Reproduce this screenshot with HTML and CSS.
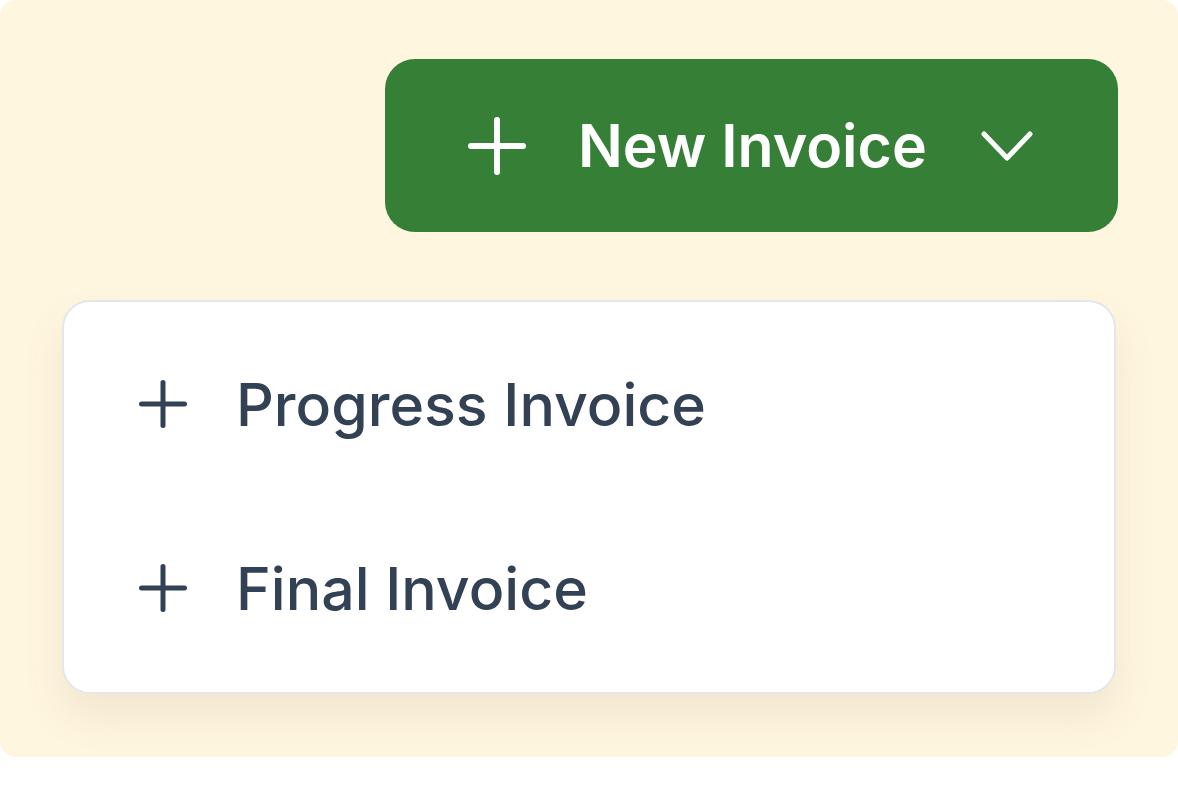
FILE: index.html
```html
<!DOCTYPE html>
<html lang="en">
<head>
    <meta charset="UTF-8">
    <meta name="viewport" content="width=device-width, initial-scale=1.0">
    <title>New Invoice</title>
    <link rel="stylesheet" href="styles.css">
</head>
<body>
    <div class="panel">
        <button class="new-button">
            <svg class="btn-plus" width="58" height="58" viewBox="0 0 58 58">
                <path d="M3 29H55M29 3V55" />
            </svg>
            <span class="btn-label">New Invoice</span>
            <svg class="btn-chevron" width="52" height="30" viewBox="0 0 52 30">
                <path d="M3 3L26 27L49 3" />
            </svg>
        </button>

        <!-- dropdown menu -->
        <div class="menu">
            <a class="menu-item" href="#">
                <svg class="item-plus" width="48" height="48" viewBox="0 0 48 48">
                    <path d="M2.5 24H45.5M24 2.5V45.5" />
                </svg>
                <span>Progress Invoice</span>
            </a>
            <a class="menu-item" href="#">
                <svg class="item-plus" width="48" height="48" viewBox="0 0 48 48">
                    <path d="M2.5 24H45.5M24 2.5V45.5" />
                </svg>
                <span>Final Invoice</span>
            </a>
        </div>
    </div>
</body>
</html>
```

FILE: styles.css
```css
body {
    margin: 0;
    padding: 0;
    background-color: #ffffff;
    font-family: Inter, "Liberation Sans", Arial, sans-serif;
}

.panel {
    width: 1178px;
    height: 757px;
    box-sizing: border-box;
    background-color: #fff6e0;
    border-radius: 16px;
    padding-top: 59px;
    display: flex;
    flex-direction: column;
}

.new-button {
    align-self: flex-end;
    margin-right: 60px;
    width: 733px;
    height: 173px;
    display: flex;
    align-items: center;
    padding: 0 0 0 83px;
    background-color: #367f36;
    border: none;
    border-radius: 30px;
    color: #ffffff;
    font-family: inherit;
    cursor: pointer;
}

.btn-plus path,
.btn-chevron path {
    fill: none;
    stroke: #ffffff;
    stroke-linecap: round;
    stroke-linejoin: round;
}

.btn-plus path {
    stroke-width: 6;
}

.btn-chevron path {
    stroke-width: 5;
}

.btn-label {
    margin-left: 52px;
    margin-right: 54px;
    font-size: 59px;
    font-weight: 600;
}

.menu {
    margin: 68px 62px 0 62px;
    height: 394px;
    box-sizing: border-box;
    background-color: #ffffff;
    border: 2px solid #e4e6ec;
    border-radius: 28px;
    box-shadow: 0 22px 40px rgba(120, 100, 50, 0.10);
    padding: 10px 0 12px 0;
    display: flex;
    flex-direction: column;
}

.menu-item {
    height: 184px;
    display: flex;
    align-items: center;
    padding-left: 75px;
    color: #334155;
    text-decoration: none;
    font-size: 59px;
    font-weight: 500;
}

.menu-item span {
    margin-left: 49px;
}

.item-plus path {
    fill: none;
    stroke: #334155;
    stroke-width: 5;
    stroke-linecap: round;
}
```
